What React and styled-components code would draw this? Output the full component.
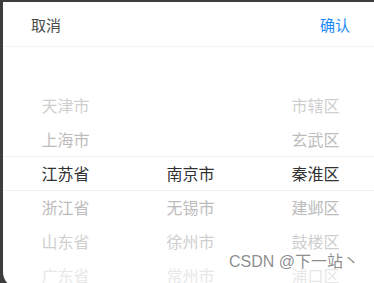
import React from "react"
import styled, { createGlobalStyle } from "styled-components"

const GlobalStyle = createGlobalStyle`
  html, body {
    margin: 0;
    padding: 0;
    height: 100%;
    overflow: hidden;
    background: #3d3d3d;
    font-family: "Noto Sans CJK SC", "Noto Sans", sans-serif;
  }
`

const ITEM_H = 34
const CENTER_TOP = 109

const Page = styled.div`
  padding: 2px 0 0 3px;
  height: 100vh;
  box-sizing: border-box;
`

const Panel = styled.div`
  position: relative;
  width: 375px;
  background: #fff;
  height: 286px;
  border-bottom-left-radius: 16px;
  overflow: hidden;
`

const Toolbar = styled.div`
  display: flex;
  justify-content: space-between;
  align-items: center;
  height: 44px;
  padding: 0 28px 0 28px;
  border-bottom: 1px solid #f2f3f5;
`

const Action = styled.button`
  border: 0;
  background: none;
  padding: 0;
  font-family: inherit;
  font-size: 15px;
  color: ${p => (p.$primary ? "#1989fa" : "#4a4a4a")};
  cursor: pointer;
`

const Columns = styled.div`
  position: relative;
  display: flex;
  height: 241px;
  overflow: hidden;
`

const Column = styled.div`
  flex: 1;
`

const List = styled.ul`
  list-style: none;
  margin: 0;
  padding: 0;
  transform: translateY(${p => p.$offset}px);
`

const shades = ["#323233", "#bcbcbc", "#cfcfcf", "#e8e8e8"]

const Item = styled.li`
  height: ${ITEM_H}px;
  display: flex;
  align-items: center;
  justify-content: center;
  font-size: 16px;
  color: ${p => shades[Math.min(p.$dist, 3)]};
`

const Band = styled.div`
  position: absolute;
  left: 0;
  right: 0;
  top: ${CENTER_TOP}px;
  height: ${ITEM_H - 1}px;
  border-top: 1px solid #f0f1f3;
  border-bottom: 1px solid #f0f1f3;
  pointer-events: none;
`

const Watermark = styled.div`
  position: absolute;
  right: 19px;
  bottom: 16px;
  font-family: "Liberation Sans", "Noto Sans CJK SC", sans-serif;
  font-size: 16px;
  color: rgba(120, 120, 120, 0.85);
  pointer-events: none;
`

const columns = [
  { items: ["天津市", "上海市", "江苏省", "浙江省", "山东省", "广东省"], selected: 2 },
  { items: ["南京市", "无锡市", "徐州市", "常州市"], selected: 0 },
  { items: ["市辖区", "玄武区", "秦淮区", "建邺区", "鼓楼区", "浦口区"], selected: 2 },
]

const App = () => (
  <Page>
    <GlobalStyle />
    <Panel>
      <Toolbar>
        <Action>取消</Action>
        <Action $primary>确认</Action>
      </Toolbar>
      <Columns>
        {columns.map((col, ci) => (
          <Column key={ci}>
            <List $offset={CENTER_TOP - col.selected * ITEM_H}>
              {col.items.map((text, i) => (
                <Item key={text} $dist={Math.abs(i - col.selected)}>
                  {text}
                </Item>
              ))}
            </List>
          </Column>
        ))}
        <Band />
      </Columns>
      <Watermark>CSDN @下一站丶</Watermark>
    </Panel>
  </Page>
)

export default App
